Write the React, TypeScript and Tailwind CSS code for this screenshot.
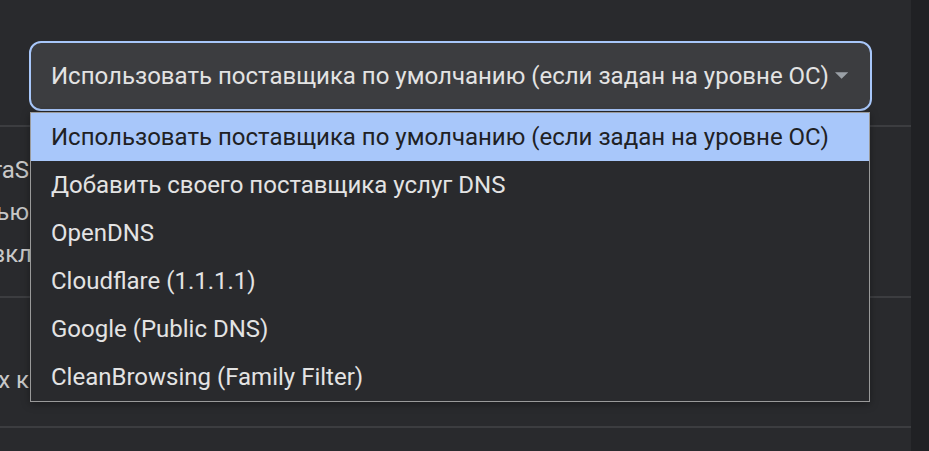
const options = [
  "Использовать поставщика по умолчанию (если задан на уровне ОС)",
  "Добавить своего поставщика услуг DNS",
  "OpenDNS",
  "Cloudflare (1.1.1.1)",
  "Google (Public DNS)",
  "CleanBrowsing (Family Filter)",
];

function Clipped({ text, w = "w-[29px]" }: { text: string; w?: string }) {
  // text runs off the left edge; only its tail shows beside the menu
  return (
    <div className={`flex justify-end ${w}`}>
      <span className="whitespace-nowrap">{text}</span>
    </div>
  );
}

export default function App() {
  const selected = 0;

  return (
    <div
      className="flex w-[929px] h-[451px] overflow-hidden bg-[#292a2d]"
      style={{ fontFamily: "Roboto, 'Liberation Sans', sans-serif" }}
    >
      {/* Settings card */}
      <div className="relative w-[911px] shrink-0 flex flex-col">
        <div className="pt-[41px] pl-[29px] pr-[39px]">
          <div className="flex items-center h-[70px] rounded-[12px] border-[2.5px] border-[#a8c7fa] bg-[#3c3d40] pl-[20px] pr-[22px]">
            <span className="flex-1 text-[24px] text-[#e3e3e3] whitespace-nowrap">
              {options[selected]}
            </span>
            <svg width="14" height="8" viewBox="0 0 14 8" className="ml-[6px]">
              <path d="M0 0 L14 0 L7 7 Z" fill="#9aa0a6" />
            </svg>
          </div>
        </div>

        <div className="mt-[14px] h-[2px] bg-[#3c3d40]" />

        {/* Rows behind the menu */}
        <div className="h-[169px] pt-[22px] text-[24px] leading-[42px] text-[#c8c8c8]">
          <Clipped text="NextDNS и ExtraS" />
          <Clipped text="Настройки с помощью" />
          <Clipped text="Можно вкл" w="w-[32px]" />
        </div>

        <div className="h-[2px] bg-[#3c3d40]" />

        <div className="h-[128px] pt-[61px] text-[24px] leading-[42px] text-[#c8c8c8]">
          <Clipped text="Для защищённых к" />
        </div>

        <div className="h-[2px] bg-[#3c3d40]" />

        {/* Open menu */}
        <ul className="absolute left-[30px] top-[112px] w-[840px] border border-[#9a9a9a] bg-[#292a2d] shadow-[0_2px_8px_rgba(0,0,0,0.35)]">
          {options.map((opt, i) => (
            <li
              key={opt}
              className={`h-[48px] flex items-center pl-[20px] text-[24px] whitespace-nowrap ${
                i === selected
                  ? "bg-[#a8c7fa] text-[#202124]"
                  : "text-[#e3e3e3]"
              }`}
            >
              {opt}
            </li>
          ))}
        </ul>
      </div>

      {/* Right edge */}
      <div className="flex-1 bg-[#202124]" />
    </div>
  );
}
